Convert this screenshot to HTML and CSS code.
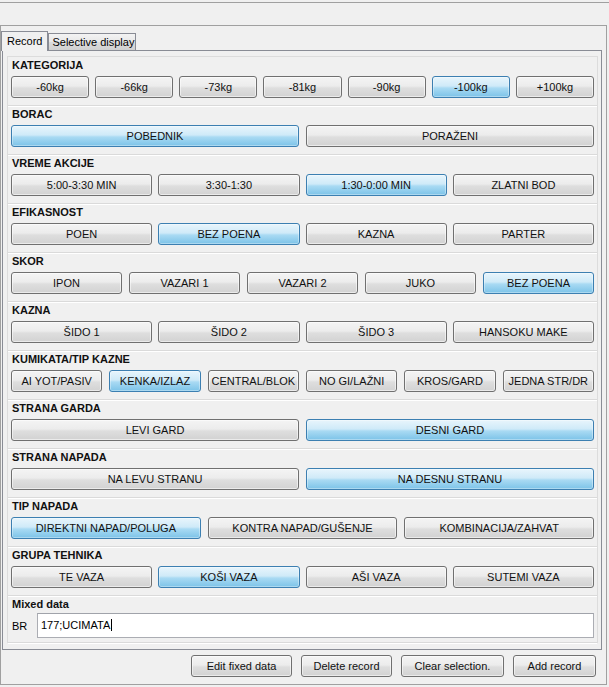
FILE: index.html
```html
<!DOCTYPE html>
<html>
<head>
<meta charset="utf-8">
<link rel="stylesheet" href="styles.css">
</head>
<body>
<div class="topbar"></div>
<div class="frame">
  <div class="tabs">
    <div class="tab active">Record</div>
    <div class="tab">Selective display</div>
  </div>
  <div class="pane">
    <div class="sections">
      <div class="section">
        <div class="label">KATEGORIJA</div>
        <div class="row cols-7">
          <button class="btn">-60kg</button>
          <button class="btn">-66kg</button>
          <button class="btn">-73kg</button>
          <button class="btn">-81kg</button>
          <button class="btn">-90kg</button>
          <button class="btn on">-100kg</button>
          <button class="btn">+100kg</button>
        </div>
      </div>
      <div class="section">
        <div class="label">BORAC</div>
        <div class="row cols-2">
          <button class="btn on">POBEDNIK</button>
          <button class="btn">PORAŽENI</button>
        </div>
      </div>
      <div class="section">
        <div class="label">VREME AKCIJE</div>
        <div class="row cols-4">
          <button class="btn">5:00-3:30 MIN</button>
          <button class="btn">3:30-1:30</button>
          <button class="btn on">1:30-0:00 MIN</button>
          <button class="btn">ZLATNI BOD</button>
        </div>
      </div>
      <div class="section">
        <div class="label">EFIKASNOST</div>
        <div class="row cols-4">
          <button class="btn">POEN</button>
          <button class="btn on">BEZ POENA</button>
          <button class="btn">KAZNA</button>
          <button class="btn">PARTER</button>
        </div>
      </div>
      <div class="section">
        <div class="label">SKOR</div>
        <div class="row cols-5">
          <button class="btn">IPON</button>
          <button class="btn">VAZARI 1</button>
          <button class="btn">VAZARI 2</button>
          <button class="btn">JUKO</button>
          <button class="btn on">BEZ POENA</button>
        </div>
      </div>
      <div class="section">
        <div class="label">KAZNA</div>
        <div class="row cols-4">
          <button class="btn">ŠIDO 1</button>
          <button class="btn">ŠIDO 2</button>
          <button class="btn">ŠIDO 3</button>
          <button class="btn">HANSOKU MAKE</button>
        </div>
      </div>
      <div class="section">
        <div class="label">KUMIKATA/TIP KAZNE</div>
        <div class="row cols-6">
          <button class="btn">AI YOT/PASIV</button>
          <button class="btn on">KENKA/IZLAZ</button>
          <button class="btn">CENTRAL/BLOK</button>
          <button class="btn">NO GI/LAŽNI</button>
          <button class="btn">KROS/GARD</button>
          <button class="btn">JEDNA STR/DR</button>
        </div>
      </div>
      <div class="section">
        <div class="label">STRANA GARDA</div>
        <div class="row cols-2">
          <button class="btn">LEVI GARD</button>
          <button class="btn on">DESNI GARD</button>
        </div>
      </div>
      <div class="section">
        <div class="label">STRANA NAPADA</div>
        <div class="row cols-2">
          <button class="btn">NA LEVU STRANU</button>
          <button class="btn on">NA DESNU STRANU</button>
        </div>
      </div>
      <div class="section">
        <div class="label">TIP NAPADA</div>
        <div class="row cols-3">
          <button class="btn on">DIREKTNI NAPAD/POLUGA</button>
          <button class="btn">KONTRA NAPAD/GUŠENJE</button>
          <button class="btn">KOMBINACIJA/ZAHVAT</button>
        </div>
      </div>
      <div class="section">
        <div class="label">GRUPA TEHNIKA</div>
        <div class="row cols-4">
          <button class="btn">TE VAZA</button>
          <button class="btn on">KOŠI VAZA</button>
          <button class="btn">AŠI VAZA</button>
          <button class="btn">SUTEMI VAZA</button>
        </div>
      </div>
      <div class="section mixed">
        <div class="label">Mixed data</div>
        <div class="field-row">
          <span class="field-label">BR</span>
          <div class="field"><span class="caret">177;UCIMATA</span></div>
        </div>
      </div>
    </div>
  </div>
  <div class="actions">
    <button class="btn action w-edit">Edit fixed data</button>
    <button class="btn action w-delete">Delete record</button>
    <button class="btn action w-clear">Clear selection.</button>
    <button class="btn action w-add">Add record</button>
  </div>
</div>
</body>
</html>
```

FILE: styles.css
```css
* {
  box-sizing: border-box;
}

html, body {
  margin: 0;
  padding: 0;
  background: #f0f0f0;
  font-family: "Liberation Sans", Arial, sans-serif;
  font-size: 11px;
  color: #000;
}

body {
  width: 609px;
  height: 687px;
  overflow: hidden;
}

.topbar {
  margin-top: 2px;
  height: 23px;
  border-top: 1px solid #a0a0a0;
}

.frame {
  width: 607px;
  height: 660px;
  border: 1px solid #a0a0a0;
  padding-top: 5px;
  display: flex;
  flex-direction: column;
}

.tabs {
  display: flex;
  align-items: flex-end;
  height: 19px;
}

.tab {
  height: 17px;
  border: 1px solid #898c95;
  border-bottom: none;
  background: linear-gradient(#f3f3f3, #e8e8e8 50%, #dcdcdc 51%, #d0d0d0);
  padding: 0 1px 0 3px;
  line-height: 17px;
  font-size: 11px;
  color: #000;
}

.tab.active {
  height: 20px;
  margin-bottom: -1px;
  position: relative;
  z-index: 1;
  background: #f0f0f0;
  padding: 0 5px 0 5px;
  line-height: 18px;
}

.pane {
  margin-left: 1px;
  width: 600px;
  height: 600px;
  border: 1px solid #898c95;
  background: #f0f0f0;
  padding: 5px 3px 0 4px;
}

.sections {
  width: 591px;
  border-left: 1px solid #dcdcdc;
  border-right: 1px solid #dcdcdc;
  border-top: 1px solid #dcdcdc;
}

.section {
  height: 49px;
  padding: 0 3px 0 3px;
  border-bottom: 1px solid #dadada;
  box-shadow: 0 1px 0 #ffffff;
}

.section.mixed {
  height: 47px;
}

.label {
  font-weight: bold;
  line-height: 16px;
  padding-left: 1px;
  margin-bottom: 3px;
  color: #111;
}

.row {
  display: grid;
  column-gap: 6px;
}

.cols-2 { grid-template-columns: repeat(2, 1fr); column-gap: 7px; }
.cols-3 { grid-template-columns: repeat(3, 1fr); column-gap: 7px; }
.cols-4 { grid-template-columns: repeat(4, 1fr); }
.cols-5 { grid-template-columns: repeat(5, 1fr); column-gap: 7px; }
.cols-6 { grid-template-columns: repeat(6, 1fr); column-gap: 7px; }
.cols-7 { grid-template-columns: repeat(7, 1fr); }

.btn {
  height: 22px;
  margin: 0;
  padding: 0;
  border: 1px solid #707070;
  border-radius: 3px;
  background: linear-gradient(#f4f4f4 0%, #ececec 45%, #dedede 55%, #d2d2d2 100%);
  box-shadow: inset 0 0 0 1px rgba(255, 255, 255, 0.55);
  font-family: "Liberation Sans", Arial, sans-serif;
  font-size: 11px;
  color: #111;
  white-space: nowrap;
  overflow: hidden;
}

.btn.on {
  border-color: #3c7fb1;
  background: linear-gradient(#e8f5fc 0%, #cfeaf8 45%, #a9daf3 55%, #7cc3e8 100%);
  box-shadow: inset 0 0 0 1px rgba(255, 255, 255, 0.35);
}

.field-row {
  display: flex;
  align-items: center;
  margin-top: -2px;
}

.field-label {
  width: 26px;
  padding-left: 1px;
}

.field {
  width: 558px;
  height: 25px;
  border: 1px solid #abadb3;
  border-top-color: #a0a3aa;
  background: #fff;
  padding-left: 3px;
  line-height: 23px;
}

.caret {
  border-right: 1px solid #000;
  padding-right: 1px;
}

.actions {
  display: flex;
  justify-content: flex-end;
  gap: 9px;
  margin-top: 5px;
  padding-right: 10px;
}

.btn.action {
  font-size: 11px;
}

.w-edit { width: 101px; }
.w-delete { width: 91px; }
.w-clear { width: 103px; }
.w-add { width: 83px; }
```
